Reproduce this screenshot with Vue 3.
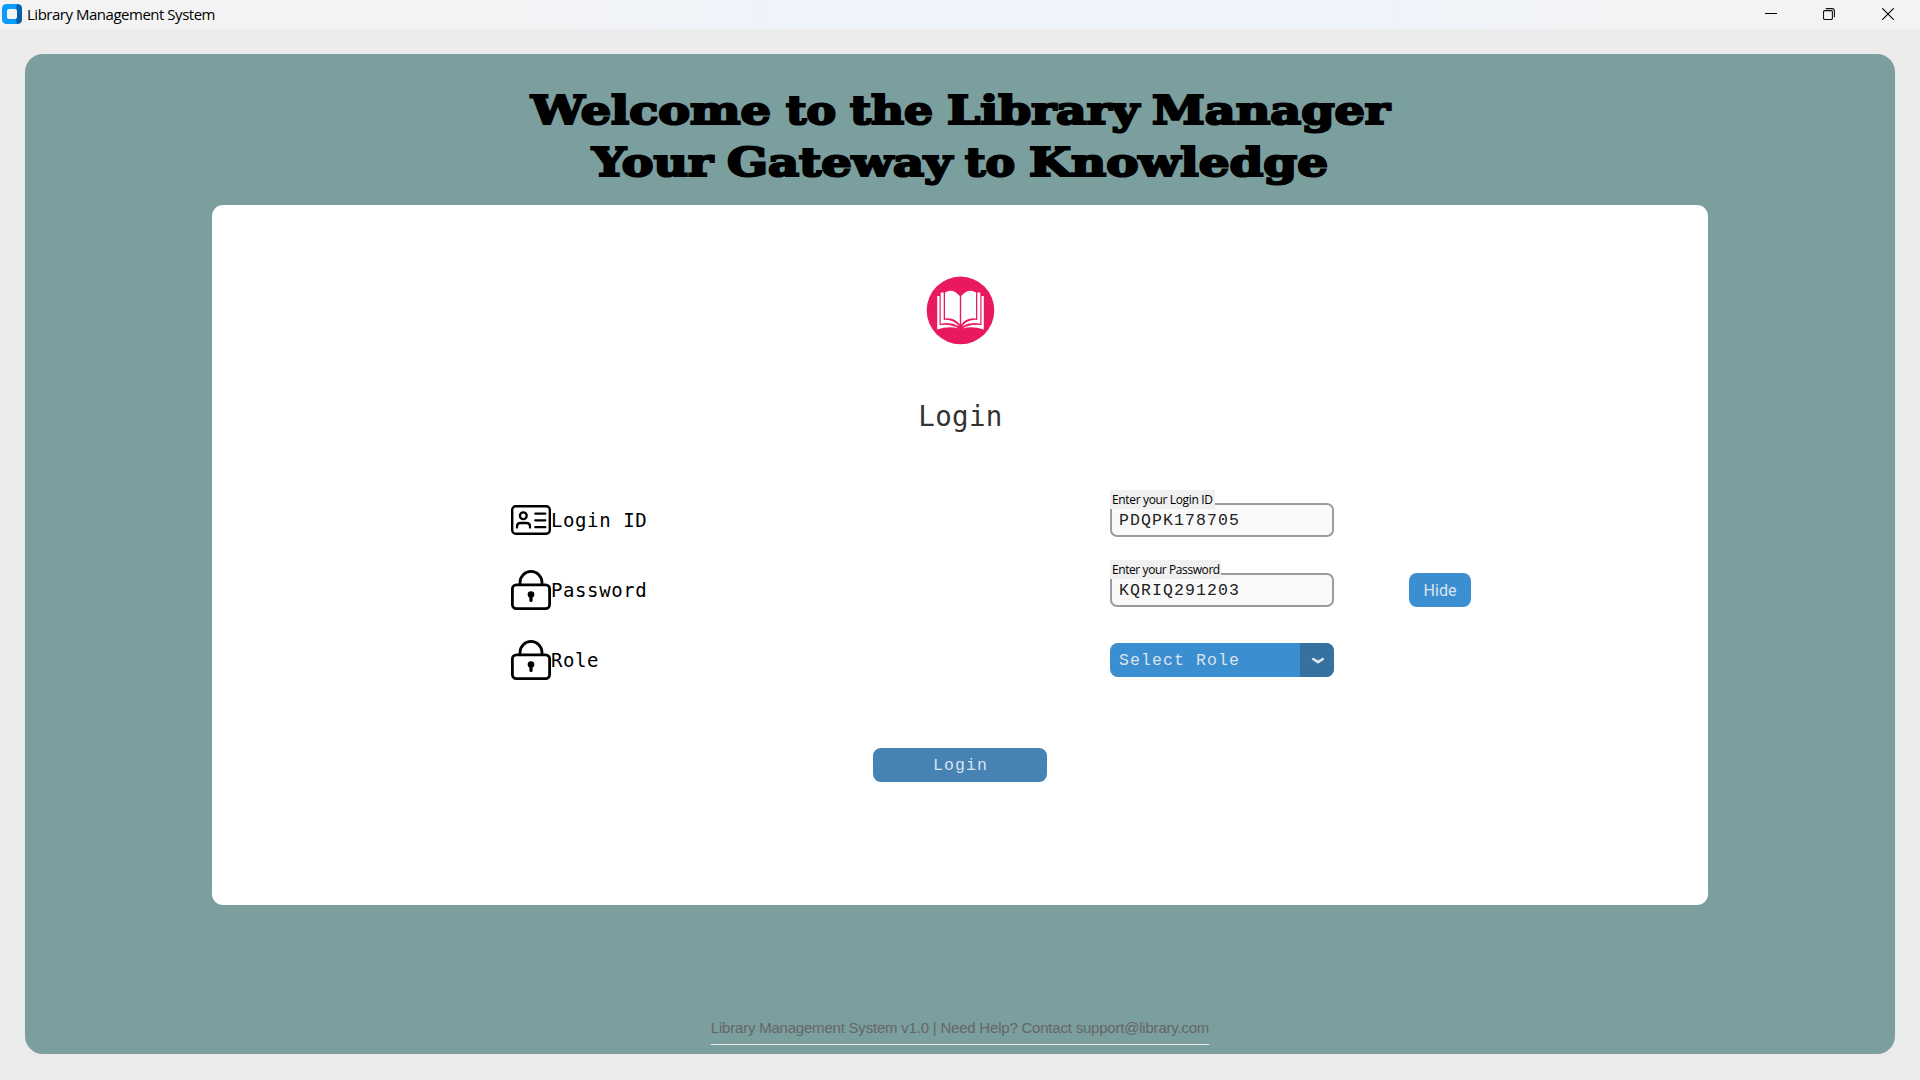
<script setup>
import { ref } from 'vue'

const loginId = ref('PDQPK178705')
const password = ref('KQRIQ291203')
</script>

<template>
  <div class="window">
    <header class="titlebar">
      <svg class="app-icon" width="20" height="20" viewBox="0 0 20 20">
        <rect width="20" height="20" rx="4.5" fill="#0a9bff" />
        <path d="M15 0.2 Q20 0.4 20 5 V15 Q20 19.6 15 19.9 L13.5 15 L15 13 V6 L14 4 Z" fill="#0560ae" />
        <rect x="5" y="5" width="10" height="10" rx="2" fill="#f3f3f3" />
      </svg>
      <span class="app-name">Library Management System</span>
      <div class="controls">
        <svg width="12" height="12" viewBox="0 0 12 12"><path d="M0 5.5H12" stroke="#000" fill="none" /></svg>
        <svg class="restore" width="12" height="12" viewBox="0 0 12 12" fill="none" stroke="#111" stroke-width="1.1">
          <rect x="0.5" y="2.6" width="8.9" height="8.9" rx="1.2" />
          <path d="M2.8 0.6H9Q11.4 0.6 11.4 3V9.2" />
        </svg>
        <svg width="12" height="12" viewBox="0 0 12 12"><path d="M0.3 0.3L11.7 11.7M11.7 0.3L0.3 11.7" stroke="#000" stroke-width="1.1" fill="none" /></svg>
      </div>
    </header>

    <main class="panel">
      <svg class="headline" width="880" height="130" viewBox="520 74 880 130">
        <text y="123.500"><tspan x="531" textLength="240" lengthAdjust="spacingAndGlyphs">Welcome</tspan> <tspan x="786" textLength="50" lengthAdjust="spacingAndGlyphs">to</tspan> <tspan x="850" textLength="83" lengthAdjust="spacingAndGlyphs">the</tspan> <tspan x="947" textLength="192" lengthAdjust="spacingAndGlyphs">Library</tspan> <tspan x="1152" textLength="238" lengthAdjust="spacingAndGlyphs">Manager</tspan></text>
        <text y="175.500"><tspan x="592" textLength="121" lengthAdjust="spacingAndGlyphs">Your</tspan> <tspan x="727" textLength="225" lengthAdjust="spacingAndGlyphs">Gateway</tspan> <tspan x="965" textLength="50" lengthAdjust="spacingAndGlyphs">to</tspan> <tspan x="1029" textLength="299" lengthAdjust="spacingAndGlyphs">Knowledge</tspan></text>
      </svg>

      <section class="card">
        <svg class="logo" width="68" height="68" viewBox="-0.5 0.6 68 68">
          <circle cx="34" cy="34" r="33.8" fill="#e9195f" />
          <g fill="#fff">
            <path d="M33.300 19.500Q26 11.500 18.500 16V42Q27.500 40.500 33.300 48Z" />
            <path d="M34.700 19.500Q42 11.500 49.500 16V42Q40.500 40.500 34.700 48Z" />
            <path d="M14.200 16H17.200V43.600Q26.500 42.500 32.800 50Q24 45.300 14.200 47.300Z" />
            <path d="M53.800 16H50.800V43.600Q41.500 42.500 35.200 50Q44 45.300 53.800 47.300Z" />
            <path d="M10.700 19.500H13V48.700Q24 47 32 52Q22 49.500 10.700 53Z" />
            <path d="M57.300 19.500H55V48.700Q44 47 36 52Q46 49.500 57.300 53Z" />
          </g>
        </svg>
        <h2>Login</h2>

        <form class="form" @submit.prevent>
          <div class="label">
            <svg width="40" height="40" viewBox="0 0 40 40" fill="none" stroke="#000" stroke-width="2.300" stroke-linecap="round">
              <rect x="1.200" y="6.200" width="37.600" height="27.600" rx="3.500" stroke-width="2.400" />
              <circle cx="12.300" cy="15.800" r="3.400" />
              <path d="M6 27.500V26.500Q6 23 9.500 23H15.500Q19 23 19 26.500V27.500M24.300 13.700H34.300M24.300 20.300H34.300M24.300 27.200H34.300" />
            </svg>
            <span>Login ID</span>
          </div>
          <div class="field">
            <span class="hint hint-id">Enter your Login ID</span>
            <input v-model="loginId" type="text" />
          </div>
          <span></span>

          <div class="label">
            <svg width="40" height="40" viewBox="0 0 40 40" fill="none" stroke="#000" stroke-width="2.800">
              <path d="M9 14.500V12.500A11 11.100 0 0 1 31 12.500V14.500" />
              <rect x="1.400" y="14.800" width="37.200" height="23.800" rx="4" />
              <circle cx="20" cy="24.500" r="3.300" fill="#000" stroke="none" />
              <path d="M20 25V30.500" stroke-width="3.200" stroke-linecap="round" />
            </svg>
            <span>Password</span>
          </div>
          <div class="field">
            <span class="hint hint-pw">Enter your Password</span>
            <input v-model="password" type="text" />
          </div>
          <button class="hide" type="button">Hide</button>

          <div class="label">
            <svg width="40" height="40" viewBox="0 0 40 40" fill="none" stroke="#000" stroke-width="2.800">
              <path d="M9 14.500V12.500A11 11.100 0 0 1 31 12.500V14.500" />
              <rect x="1.400" y="14.800" width="37.200" height="23.800" rx="4" />
              <circle cx="20" cy="24.500" r="3.300" fill="#000" stroke="none" />
              <path d="M20 25V30.500" stroke-width="3.200" stroke-linecap="round" />
            </svg>
            <span>Role</span>
          </div>
          <div class="select">
            <span class="select-text">Select Role</span>
            <span class="select-arrow">
              <svg width="14" height="8" viewBox="0 0 14 8"><path d="M2.200 2L7 5.200L11.800 2" fill="none" stroke="#dce4ee" stroke-width="2.600" stroke-linecap="round" stroke-linejoin="round" /></svg>
            </span>
          </div>
          <span></span>
        </form>

        <button class="submit" type="button">Login</button>
      </section>

      <footer>Library Management System v1.0 | Need Help? Contact support@library.com</footer>
    </main>
  </div>
</template>

<style>
body {
  margin: 0;
}
</style>

<style scoped>
* {
  box-sizing: border-box;
}
.window {
  width: 1920px;
  height: 1080px;
  overflow: hidden;
  background: #ebebeb;
  display: flex;
  flex-direction: column;
}
.titlebar {
  height: 29px;
  flex: none;
  display: flex;
  align-items: center;
  padding: 0 26px 1px 2px;
  background: linear-gradient(90deg, #f3f3f3 0%, #f3f3f3 22%, #eff4fc 45%, #eff4fc 68%, #f3f3f3 88%);
}
.app-name {
  margin-left: 5px;
  font: 15px/20px "Open Sans", sans-serif;
  letter-spacing: -0.480px;
  color: #000;
  white-space: nowrap;
}
.controls {
  margin-left: auto;
  display: flex;
  gap: 47px;
}
.restore {
  margin-left: -1px;
}
.panel {
  width: 1870px;
  height: 1000px;
  margin: 25px auto 0;
  border-radius: 18px;
  background: #7b9e9f;
  display: flex;
  flex-direction: column;
  align-items: center;
}
.headline {
  flex: none;
  margin-top: 20px;
  font-family: "DejaVu Serif", serif;
  font-weight: 700;
  font-size: 39px;
  fill: #000;
  stroke: #000;
  stroke-width: 2.200px;
}
.card {
  width: 1496px;
  height: 700px;
  flex: none;
  margin-top: 1px;
  border-radius: 11px;
  background: #fff;
  display: flex;
  flex-direction: column;
  align-items: center;
}
.logo {
  flex: none;
  overflow: visible;
  margin: 72px 0 0;
}
h2 {
  margin: 51px 0 0;
  height: 40px;
  font: 400 27.500px/40px "DejaVu Sans Mono", monospace;
  letter-spacing: 0.300px;
  text-indent: 1px;
  color: #333;
}
.form {
  width: 1496px;
  margin-top: 49px;
  padding-left: 299px;
  display: grid;
  grid-template-columns: 599px 299px 62px;
  grid-template-rows: repeat(3, 70px);
  align-items: center;
}
.label {
  display: flex;
  align-items: center;
  font: 19px/24px "DejaVu Sans Mono", monospace;
  letter-spacing: 0.600px;
  color: #000;
}
.field {
  position: relative;
  width: 224px;
  height: 34px;
}
.field input {
  display: block;
  width: 224px;
  height: 34px;
  padding: 0 0 0 7px;
  border: 2px solid #979da2;
  border-radius: 7px;
  background: #f9f9fa;
  outline: none;
  font: 16.500px/20px "Liberation Mono", monospace;
  letter-spacing: 1.100px;
  color: #222;
}
.hint {
  position: absolute;
  left: 0;
  top: -13px;
  height: 19px;
  padding-left: 2px;
  background: #f0f0f0;
  font: 12px/19px "Open Sans", sans-serif;
  letter-spacing: -0.350px;
  color: #000;
  white-space: nowrap;
}
.hint-id {
  width: 105px;
}
.hint-pw {
  width: 111px;
  letter-spacing: -0.420px;
}
button {
  border: 0;
  padding: 0;
  color: #dce4ee;
}
.hide {
  width: 62px;
  height: 34px;
  border-radius: 8px;
  background: #3b8ed0;
  font: 16px/33px Roboto, sans-serif;
}
.select {
  width: 224px;
  height: 34px;
  border-radius: 8px;
  overflow: hidden;
  background: #3b8ed0;
  display: flex;
}
.select-text {
  flex: 1;
  padding-left: 9px;
  font: 16.500px/36px "Liberation Mono", monospace;
  letter-spacing: 1.100px;
  color: #dce4ee;
}
.select-arrow {
  width: 34px;
  background: #36719f;
  display: flex;
  align-items: center;
  justify-content: center;
  padding: 2px 0 0 2px;
}
.submit {
  width: 174px;
  height: 34px;
  margin-top: 53px;
  padding-top: 1px;
  border-radius: 8px;
  background: #4682b4;
  font: 16.500px/33px "Liberation Mono", monospace;
  letter-spacing: 1.050px;
  text-indent: 1px;
}
footer {
  margin-top: 110px;
  height: 30px;
  border-bottom: 1px solid #ebebeb;
  font: 15px/25px "Liberation Sans", sans-serif;
  letter-spacing: -0.210px;
  color: #666;
  white-space: nowrap;
}
</style>
